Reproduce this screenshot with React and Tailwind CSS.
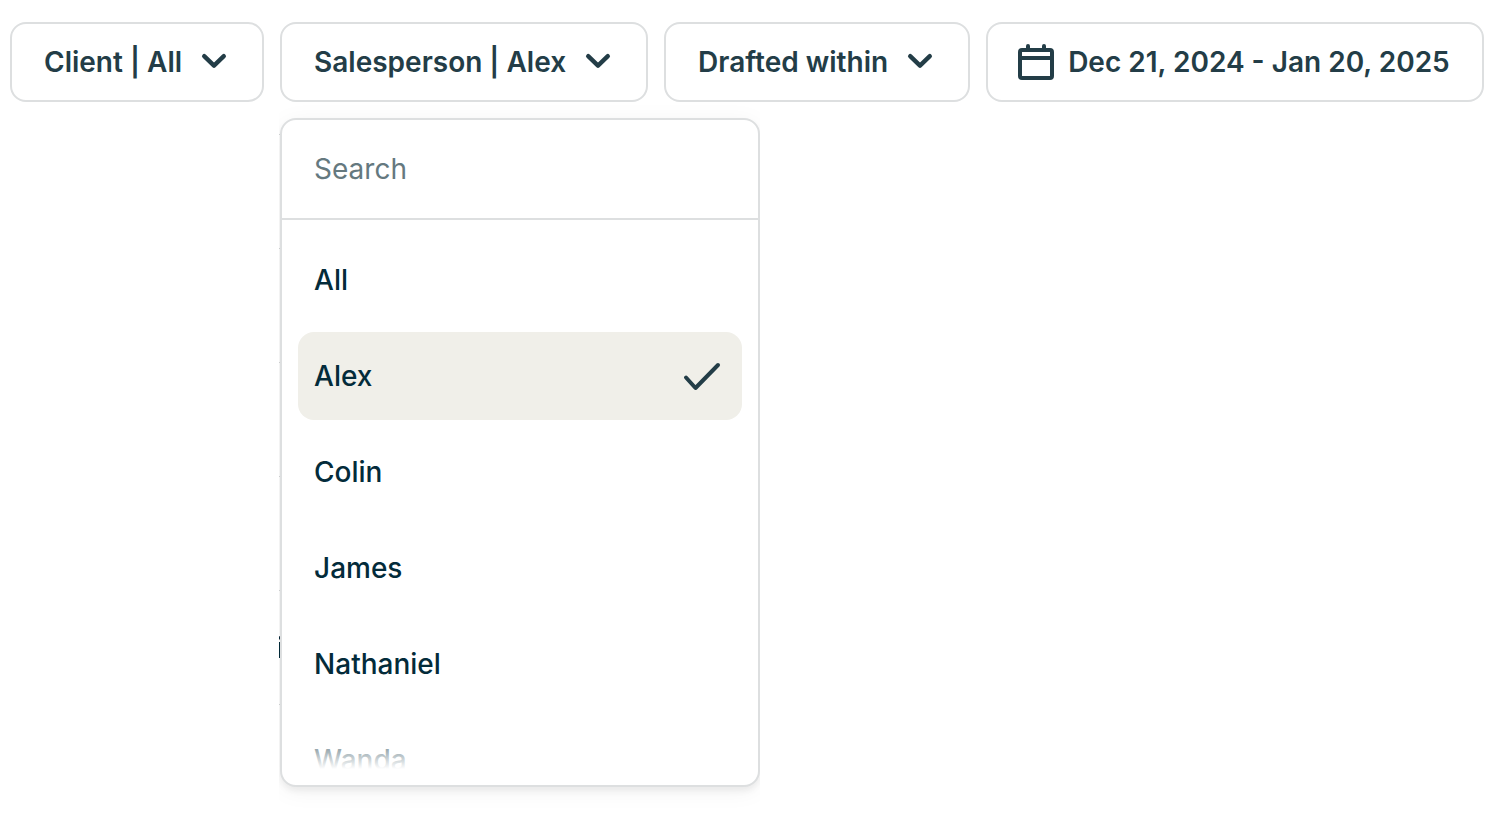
import React, { useState } from 'react';

const salespeople = ['All', 'Alex', 'Colin', 'James', 'Nathaniel', 'Wanda'];

const ChevronIcon = () => (
  <svg className="w-8 h-8 shrink-0" viewBox="0 0 32 32" fill="none" stroke="currentColor" aria-hidden="true">
    <path strokeLinecap="round" strokeLinejoin="round" strokeWidth={4.4} d="M6.2 10.2l9.8 9.4 9.8-9.4" />
  </svg>
);

const CalendarIcon = () => (
  <svg className="w-9 h-9 shrink-0" viewBox="0 0 36 36" fill="none" stroke="currentColor" aria-hidden="true">
    <rect x="2" y="6" width="32" height="28" rx="2" strokeWidth={4} />
    <path strokeWidth={4} d="M2 14h32" />
    <path strokeLinecap="round" strokeWidth={4} d="M10 2v4M26 2v4" />
  </svg>
);

const CheckIcon = () => (
  <svg className="w-10 h-10 shrink-0" viewBox="0 0 40 40" fill="none" stroke="currentColor" aria-hidden="true">
    <path strokeLinecap="round" strokeLinejoin="round" strokeWidth={4} d="M4 21.5l9.5 10.5L36 9" />
  </svg>
);

const FilterButton = ({ children, ...props }) => (
  <button
    type="button"
    className="flex items-center gap-4 h-20 px-8 border-2 border-[#dddfe0] rounded-2xl bg-white whitespace-nowrap"
    {...props}
  >
    <span>{children}</span>
    <ChevronIcon />
  </button>
);

const SalespersonMenu = ({ selected, onSelect }) => {
  const [query, setQuery] = useState('');
  const people = salespeople.filter((name) => name.toLowerCase().includes(query.toLowerCase()));

  return (
    <div className="absolute top-full -left-px w-[481px] h-[712px] pt-4 pl-px overflow-hidden">
      {/* edge of the table that lies under the menu */}
      <div className="absolute top-0 left-0 w-px h-full overflow-hidden pt-8" aria-hidden="true">
        {[0, 1, 2, 3, 4, 5].map((row) => (
          <div key={row} className="flex items-center justify-center h-[114px] border-t border-[#d5d8d9]">
            {row === 4 && <span className="font-normal text-[#032b3a]">i</span>}
          </div>
        ))}
      </div>
      <div className="relative border-2 border-[#dddfe0] rounded-2xl bg-white shadow-[0_4px_24px_rgba(0,0,0,0.05),0_4px_6px_rgba(0,0,0,0.06)]">
        <input
          type="text"
          aria-label="Search"
          placeholder="Search"
          value={query}
          onChange={(e) => setQuery(e.target.value)}
          className="block w-full h-[100px] px-8 border-b-2 border-[#dddfe0] rounded-t-2xl font-normal outline-none placeholder:text-[#65797f]"
        />
        <div className="relative my-4">
          <ul className="flex flex-col gap-2 h-[533px] px-4 overflow-hidden">
            {people.map((name) => (
              <li key={name}>
                <button
                  type="button"
                  aria-pressed={name === selected}
                  onClick={() => onSelect(name)}
                  className={`flex items-center justify-between w-full h-[88px] pl-4 pr-5 rounded-2xl text-left ${
                    name === selected ? 'bg-[#f0efe9]' : 'bg-white'
                  }`}
                >
                  <span className="font-medium text-[#032b3a]">{name}</span>
                  {name === selected && <CheckIcon />}
                </button>
              </li>
            ))}
          </ul>
          <div className="absolute bottom-0 inset-x-0 h-12 bg-linear-to-t from-white to-transparent pointer-events-none"></div>
        </div>
      </div>
    </div>
  );
};

const App = () => {
  const [salesperson, setSalesperson] = useState('Alex');
  const [open, setOpen] = useState(true);

  return (
    <div className="min-h-screen pt-[22px] px-[10px] bg-white font-['Inter',sans-serif] text-[28px] leading-10 font-semibold text-[#233d47]">
      <div className="flex items-start gap-4">
        <FilterButton>Client | All</FilterButton>
        <div className="relative">
          <FilterButton aria-expanded={open} onClick={() => setOpen(!open)}>
            Salesperson | {salesperson}
          </FilterButton>
          {open && <SalespersonMenu selected={salesperson} onSelect={setSalesperson} />}
        </div>
        <FilterButton>Drafted within</FilterButton>
        <button
          type="button"
          className="flex items-center gap-[14px] h-20 pl-[30px] pr-8 border-2 border-[#dddfe0] rounded-2xl bg-white whitespace-nowrap"
        >
          <CalendarIcon />
          <span>Dec 21, 2024 - Jan 20, 2025</span>
        </button>
      </div>
    </div>
  );
};

export default App;
